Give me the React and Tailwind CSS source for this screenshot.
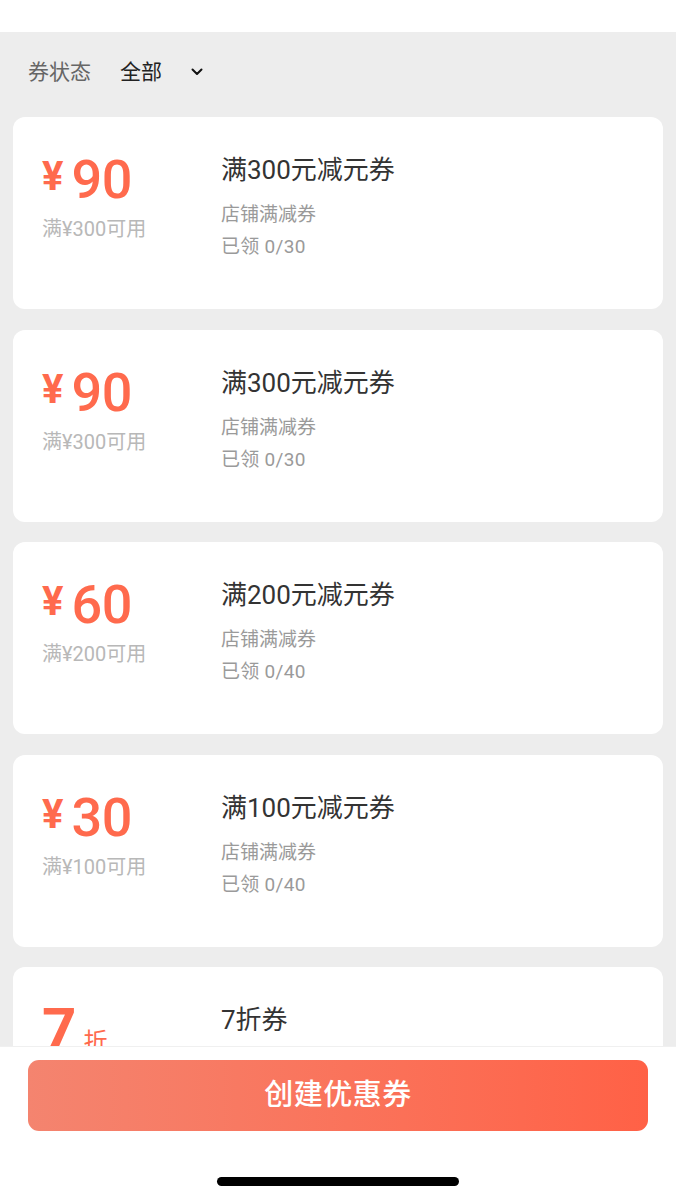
import React from 'react'

const coupons = [
  { amount: '90', min: '满¥300可用', title: '满300元减元券', type: '店铺满减券', got: '已领 0/30' },
  { amount: '90', min: '满¥300可用', title: '满300元减元券', type: '店铺满减券', got: '已领 0/30' },
  { amount: '60', min: '满¥200可用', title: '满200元减元券', type: '店铺满减券', got: '已领 0/40' },
  { amount: '30', min: '满¥100可用', title: '满100元减元券', type: '店铺满减券', got: '已领 0/40' },
  { discount: '7', title: '7折券' },
]

const CouponCard = ({ c }) => {
  return (
    <div className="h-[192px] shrink-0 rounded-[12px] bg-white flex pt-[35px] pl-[29px]">
      {/* left: amount */}
      <div className="w-[179px] shrink-0">
        {c.discount ? (
          <div className="flex items-baseline text-[#ff6a4d] font-['Roboto',sans-serif]">
            <span className="text-[60px] leading-[56px] font-bold">{c.discount}</span>
            <span className="ml-[7px] text-[24px] font-['Noto_Sans_CJK_SC',sans-serif]">折</span>
          </div>
        ) : (
          <>
            <div className="flex items-start text-[#ff6a4d] font-['Roboto',sans-serif]">
              <span className="text-[40px] leading-[50px] font-bold mr-[8px]">¥</span>
              <span className="text-[54px] leading-[56px] font-medium tracking-[-0.5px]">{c.amount}</span>
            </div>
            <div className="mt-[7px] text-[20px] leading-[28px] text-[#b8b8b8]">{c.min}</div>
          </>
        )}
      </div>

      {/* right: info */}
      <div className="flex flex-col">
        <div className="text-[26px] leading-[36px] text-[#333333]">{c.title}</div>
        {c.type && (
          <>
            <div className="mt-[11px] text-[19px] leading-[32px] text-[#9a9a9a]">{c.type}</div>
            <div className="text-[19px] leading-[32px] text-[#9a9a9a] tracking-[0.3px]">{c.got}</div>
          </>
        )}
      </div>
    </div>
  )
}

const App = () => {
  return (
    <div className="min-h-screen bg-[#ededed] font-['Roboto','Noto_Sans_CJK_SC',sans-serif]">
      {/* top white bar */}
      <div className="h-[32px] bg-white" />

      {/* filter */}
      <div className="flex items-center px-[28px] pt-[19px] pb-[24px] text-[21px] leading-[42px]">
        <span className="text-[#666666]">券状态</span>
        <span className="ml-[29px] text-[#222222]">全部</span>
        <svg className="ml-[29px]" width="12" height="8" viewBox="0 0 12 8" fill="none">
          <path d="M1.5 1.5 L6 6 L10.5 1.5" stroke="#111" strokeWidth="2" strokeLinecap="round" strokeLinejoin="round" />
        </svg>
      </div>

      {/* coupons */}
      <div className="flex flex-col gap-[20.5px] px-[13px] pb-[170px]">
        {coupons.map((c, i) => (
          <CouponCard key={i} c={c} />
        ))}
      </div>

      {/* bottom bar */}
      <div className="fixed bottom-0 left-0 right-0 h-[154px] bg-white border-t border-[#f0f0f0] flex flex-col items-center">
        <button className="mt-[13px] w-[620px] h-[71px] rounded-[11px] bg-linear-to-r from-[#f4846f] to-[#ff6146] text-white text-[29px] font-medium tracking-[0.5px]">
          创建优惠券
        </button>
        <div className="mt-[46px] w-[242px] h-[9px] rounded-full bg-black" />
      </div>
    </div>
  )
}

export default App
